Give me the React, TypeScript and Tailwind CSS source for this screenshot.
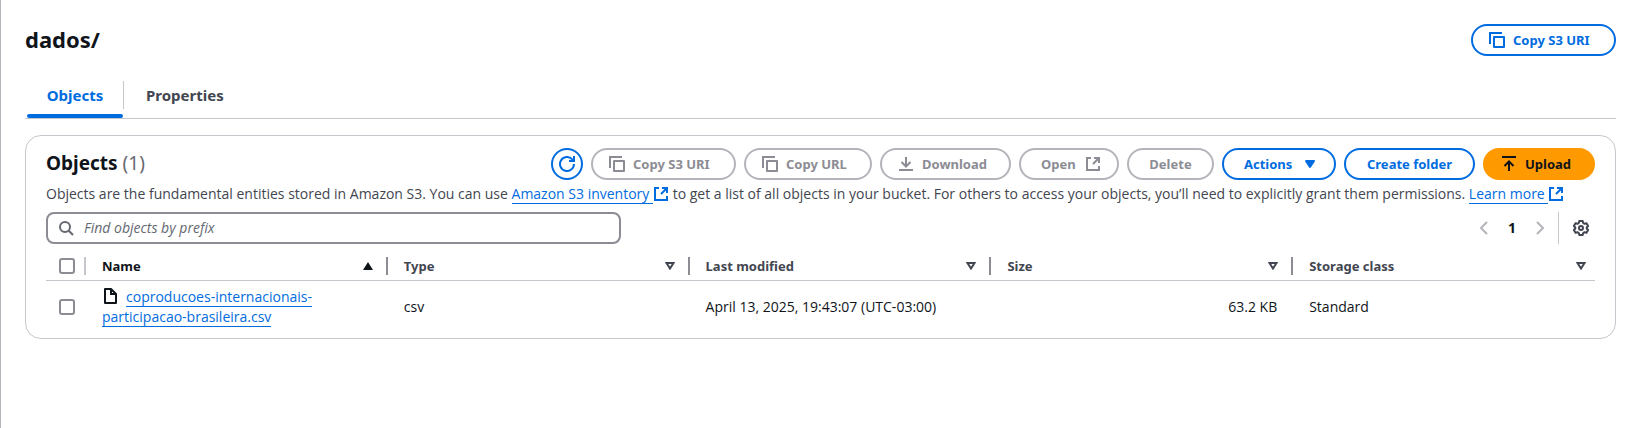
import type { ReactNode } from "react";

const files = [
  {
    name: "coproducoes-internacionais-participacao-brasileira.csv",
    type: "csv",
    modified: "April 13, 2025, 19:43:07 (UTC-03:00)",
    size: "63.2 KB",
    storage: "Standard",
  },
];

function Icon({ children, className = "" }: { children: ReactNode; className?: string }) {
  return (
    <svg
      viewBox="0 0 16 16"
      className={`size-4 shrink-0 ${className}`}
      fill="none"
      stroke="currentColor"
      strokeWidth="2"
      aria-hidden="true"
    >
      {children}
    </svg>
  );
}

const CopyIcon = () => (
  <Icon>
    <path d="M1 12V1h12" />
    <path d="M5 5h10v10H5z" strokeLinejoin="round" />
  </Icon>
);

const RefreshIcon = () => (
  <Icon>
    <path d="M15 8a7 7 0 1 1-2-4.900L15 5" />
    <path d="M15 0v5h-5" />
  </Icon>
);

const DownloadIcon = () => (
  <Icon>
    <path d="M8 1v9.500M3.500 6 8 10.500 12.500 6M1 14h14" />
  </Icon>
);

const UploadIcon = () => (
  <Icon>
    <path d="M8 15V5M3.500 10 8 5.500l4.500 4.500M1 1h14" />
  </Icon>
);

const ExternalIcon = ({ className = "" }: { className?: string }) => (
  <Icon className={className}>
    <path d="M6 2H2v12h12v-4" />
    <path d="M9 2h5v5M14 2 8 8" />
  </Icon>
);

const SearchIcon = () => (
  <Icon>
    <circle cx="7" cy="7" r="5" />
    <path d="m15 15-4.500-4.500" />
  </Icon>
);

const FileIcon = () => (
  <Icon className="inline-block align-[-2px]">
    <path d="M3 1h6l5 5v9H3z" strokeLinejoin="round" />
    <path d="M9 1v5h5" />
  </Icon>
);

const GearIcon = () => (
  <Icon>
    <path
      d="M6.300 1h3.400l.5 2 1.300.8 2-.6 1.600 2.800-1.400 1.500v1l1.400 1.500-1.600 2.800-2-.6-1.300.8-.5 2H6.300l-.5-2-1.300-.8-2 .6L.9 10l1.400-1.500v-1L.9 6l1.600-2.800 2 .6L5.800 3z"
      strokeLinejoin="round"
    />
    <circle cx="8" cy="8" r="2" />
  </Icon>
);

type Variant = "normal" | "disabled" | "primary";

const variants: Record<Variant, string> = {
  normal: "border-[#006ce0] text-[#006ce0] bg-white",
  disabled: "border-[#b4b4bb] text-[#8c8c94] bg-white",
  primary: "border-[#ff9900] bg-[#ff9900] text-[#0f141a]",
};

type IconSide = "none" | "start" | "end";

const sides: Record<IconSide, string> = {
  none: "justify-center",
  start: "justify-start pl-4",
  end: "justify-between pl-5 pr-4",
};

function Button({
  variant = "normal",
  icon = "none",
  width,
  children,
}: {
  variant?: Variant;
  icon?: IconSide;
  width: string;
  children: ReactNode;
}) {
  return (
    <button
      type="button"
      disabled={variant === "disabled"}
      className={`flex h-8 shrink-0 items-center gap-2 whitespace-nowrap rounded-full border-2 font-['Noto_Sans',sans-serif] text-[13px] font-bold ${width} ${sides[icon]} ${variants[variant]}`}
    >
      {children}
    </button>
  );
}

const linkClass = "border-b border-[#006ce0] text-[#006ce0]";

function HeaderCell({ label, sorted, last }: { label: string; sorted?: boolean; last?: boolean }) {
  return (
    <th scope="col" className="p-0 pb-[5px] text-left font-['Noto_Sans',sans-serif] text-[13px] font-bold">
      <div
        className={`flex h-[18px] items-center justify-between pl-4 ${
          last ? "pr-[9px]" : "border-r-2 border-[#8c8c94] pr-[13px]"
        } ${sorted ? "text-[#0f141a]" : "text-[#424650]"}`}
      >
        {label}
        <svg viewBox="0 0 10 8" className="h-2 w-[10px]" aria-hidden="true">
          {sorted ? (
            <path d="M0 8 5 0l5 8z" fill="currentColor" />
          ) : (
            <path d="M1.500 1h7L5 6.500z" fill="none" stroke="currentColor" strokeWidth="2" />
          )}
        </svg>
      </div>
    </th>
  );
}

function Checkbox({ label }: { label: string }) {
  return (
    <input
      type="checkbox"
      aria-label={label}
      className="block size-4 appearance-none rounded-[3px] border-2 border-[#8c8c94] bg-white checked:bg-[#006ce0]"
    />
  );
}

export default function App() {
  return (
    <main className="min-h-screen border-l border-[#b4b4bb] bg-white px-6 pt-6 font-['Open_Sans',sans-serif] text-sm leading-5 text-[#0f141a]">
      <header className="flex items-center justify-between">
        <h1 className="pb-0.5 font-['Noto_Sans',sans-serif] text-[22px] font-bold leading-7">dados/</h1>
        <Button icon="start" width="w-[145px]">
          <CopyIcon />
          Copy S3 URI
        </Button>
      </header>

      <nav className="mt-5 flex h-[43px] border-b border-[#c6c6cd] font-['Noto_Sans',sans-serif] text-[15px] font-bold">
        <a href="#objects" className="ml-0.5 flex w-24 flex-col justify-between text-[#006ce0]">
          <span className="flex h-[38px] items-center justify-center">Objects</span>
          <span className="h-1 rounded-full bg-[#006ce0]" />
        </a>
        <span className="mt-[5px] h-7 w-px bg-[#c6c6cd]" />
        <a href="#properties" className="flex h-[38px] items-center px-[22px] text-[#424650]">
          Properties
        </a>
      </nav>

      <section className="mt-4 rounded-2xl border border-[#c6c6cd] px-5 pb-[5px] pt-3">
        <div className="flex items-center justify-between">
          <h2 className="pb-0.5 font-['Noto_Sans',sans-serif] text-[19px] font-bold">
            Objects <span className="font-normal text-[#656871]">(1)</span>
          </h2>
          <div className="flex gap-2">
            <button
              type="button"
              aria-label="Refresh"
              className="flex size-8 items-center justify-center rounded-full border-2 border-[#006ce0] text-[#006ce0]"
            >
              <RefreshIcon />
            </button>
            <Button variant="disabled" icon="start" width="w-[145px]">
              <CopyIcon />
              Copy S3 URI
            </Button>
            <Button variant="disabled" icon="start" width="w-32">
              <CopyIcon />
              Copy URL
            </Button>
            <Button variant="disabled" icon="start" width="w-[131px]">
              <DownloadIcon />
              Download
            </Button>
            <Button variant="disabled" icon="end" width="w-[100px]">
              Open
              <ExternalIcon />
            </Button>
            <Button variant="disabled" width="w-[87px]">
              Delete
            </Button>
            <Button icon="end" width="w-[114px]">
              Actions
              <Icon>
                <path d="M4 5h8l-4 6z" fill="currentColor" strokeLinejoin="round" />
              </Icon>
            </Button>
            <Button width="w-[131px]">Create folder</Button>
            <Button variant="primary" icon="start" width="w-28">
              <UploadIcon />
              Upload
            </Button>
          </div>
        </div>

        <p className="mt-1 text-[#424650]">
          Objects are the fundamental entities stored in Amazon S3. You can use{" "}
          <a href="#inventory" className="text-[#006ce0]">
            <span className={linkClass}>Amazon S3 inventory </span>
            <ExternalIcon className="inline-block align-[-3px]" />
          </a>{" "}
          to get a list of all objects in your bucket. For others to access your objects, you’ll need to
          explicitly grant them permissions.{" "}
          <a href="#learn" className="text-[#006ce0]">
            <span className={linkClass}>Learn more </span>
            <ExternalIcon className="inline-block align-[-3px]" />
          </a>
        </p>

        <div className="mt-2 flex items-center justify-between">
          <label className="flex h-8 w-full max-w-[575px] items-center gap-[10px] rounded-lg border-2 border-[#8c8c94] px-[10px] text-[#656871]">
            <SearchIcon />
            <input
              type="text"
              aria-label="Find objects by prefix"
              placeholder="Find objects by prefix"
              className="min-w-0 flex-1 outline-none placeholder:italic placeholder:text-[#656871]"
            />
          </label>
          <div className="flex h-8 items-center">
            <button type="button" disabled aria-label="Previous page" className="text-[#b4b4bb]">
              <Icon>
                <path d="m11 2-6 6 6 6" />
              </Icon>
            </button>
            <button type="button" className="w-10 font-bold">
              1
            </button>
            <button type="button" disabled aria-label="Next page" className="text-[#b4b4bb]">
              <Icon>
                <path d="m5 2 6 6-6 6" />
              </Icon>
            </button>
            <span className="ml-[10px] mr-[14px] h-8 w-px bg-[#c6c6cd]" />
            <button type="button" aria-label="Preferences" className="mr-1.5 text-[#424650]">
              <GearIcon />
            </button>
          </div>
        </div>

        <table className="mt-[13px] w-full table-fixed border-collapse">
          <thead>
            <tr className="border-b border-[#c6c6cd]">
              <th className="w-10 p-0 pb-[5px]">
                <div className="flex h-[18px] items-center border-r-2 border-[#c6c6cd] pl-[13px]">
                  <Checkbox label="Select all objects" />
                </div>
              </th>
              <HeaderCell label="Name" sorted />
              <HeaderCell label="Type" />
              <HeaderCell label="Last modified" />
              <HeaderCell label="Size" />
              <HeaderCell label="Storage class" last />
            </tr>
          </thead>
          <tbody>
            {files.map((file) => (
              <tr key={file.name}>
                <td className="p-0 pl-[13px]">
                  <Checkbox label={`Select ${file.name}`} />
                </td>
                <td className="px-4 py-1.5">
                  <FileIcon />
                  <a href="#file" className={`ml-2 ${linkClass}`}>
                    {file.name}
                  </a>
                </td>
                <td className="px-4">{file.type}</td>
                <td className="px-4">{file.modified}</td>
                <td className="px-4 text-right">{file.size}</td>
                <td className="px-4">{file.storage}</td>
              </tr>
            ))}
          </tbody>
        </table>
      </section>
    </main>
  );
}
